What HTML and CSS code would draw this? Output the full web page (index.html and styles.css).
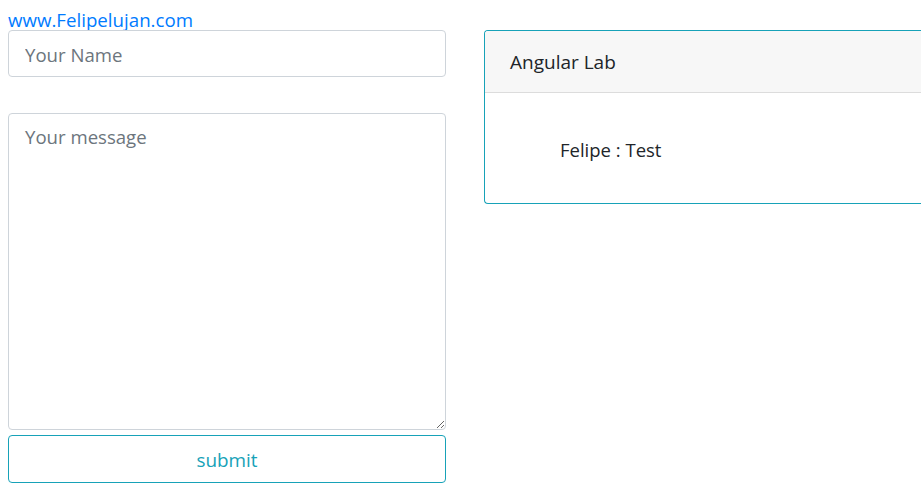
FILE: index.html
```html
<!DOCTYPE html>
<html>
<head>
<meta charset="utf-8">
<link rel="stylesheet" href="styles.css">
</head>
<body>
<a class="site-link" href="#">www.Felipelujan.com</a>
<div class="layout">
  <form class="chat-form">
    <input class="field name-field" type="text" placeholder="Your Name">
    <textarea class="field message-field" placeholder="Your message"></textarea>
    <button class="submit-btn" type="button">submit</button>
  </form>
  <div class="card">
    <div class="card-header">Angular Lab</div>
    <div class="card-body">
      <div class="message">Felipe : Test</div>
    </div>
  </div>
</div>
</body>
</html>
```
FILE: styles.css
```css
html { overflow: hidden; }
body {
  margin: 8px 0 0 8px;
  font-family: "Open Sans", "Noto Sans", sans-serif;
  color: #212529;
  font-size: 18.7px;
}
.site-link {
  display: block;
  height: 22px;
  line-height: 23px;
  font-size: 18.7px;
  color: #007bff;
  text-decoration: none;
}
.layout {
  display: grid;
  grid-template-columns: 438px 1fr;
  column-gap: 38px;
  align-items: start;
}
.chat-form {
  display: flex;
  flex-direction: column;
}
.field {
  box-sizing: border-box;
  width: 100%;
  border: 1px solid #ced4da;
  border-radius: 4px;
  font-family: inherit;
  font-size: 18.6px;
  color: #495057;
  padding: 0 16px;
  margin: 0;
  outline: none;
}
.field::placeholder { color: #6c757d; }
.name-field { height: 47px; padding-top: 2px; }
.message-field {
  height: 317px;
  margin-top: 36px;
  padding-top: 9px;
  line-height: 28px;
  resize: vertical;
  display: block;
}
.submit-btn {
  margin-top: 5px;
  height: 48px;
  box-sizing: border-box;
  border: 1px solid #17a2b8;
  border-radius: 4px;
  background: #fff;
  color: #17a2b8;
  font-family: inherit;
  font-size: 18.9px;
  padding-top: 2px;
}
.card {
  border: 1px solid #17a2b8;
  border-right: none;
  border-radius: 4px 0 0 4px;
  overflow: hidden;
}
.card-header {
  height: 62px;
  box-sizing: border-box;
  display: flex;
  align-items: center;
  padding-left: 25px;
  background: #f7f7f7;
  border-bottom: 1px solid #dcdcdc;
  font-size: 19px;
}
.card-body {
  height: 110px;
  box-sizing: border-box;
  padding-left: 75px;
  padding-top: 2px;
  display: flex;
  align-items: center;
}
.message { font-size: 18.5px; }
```
